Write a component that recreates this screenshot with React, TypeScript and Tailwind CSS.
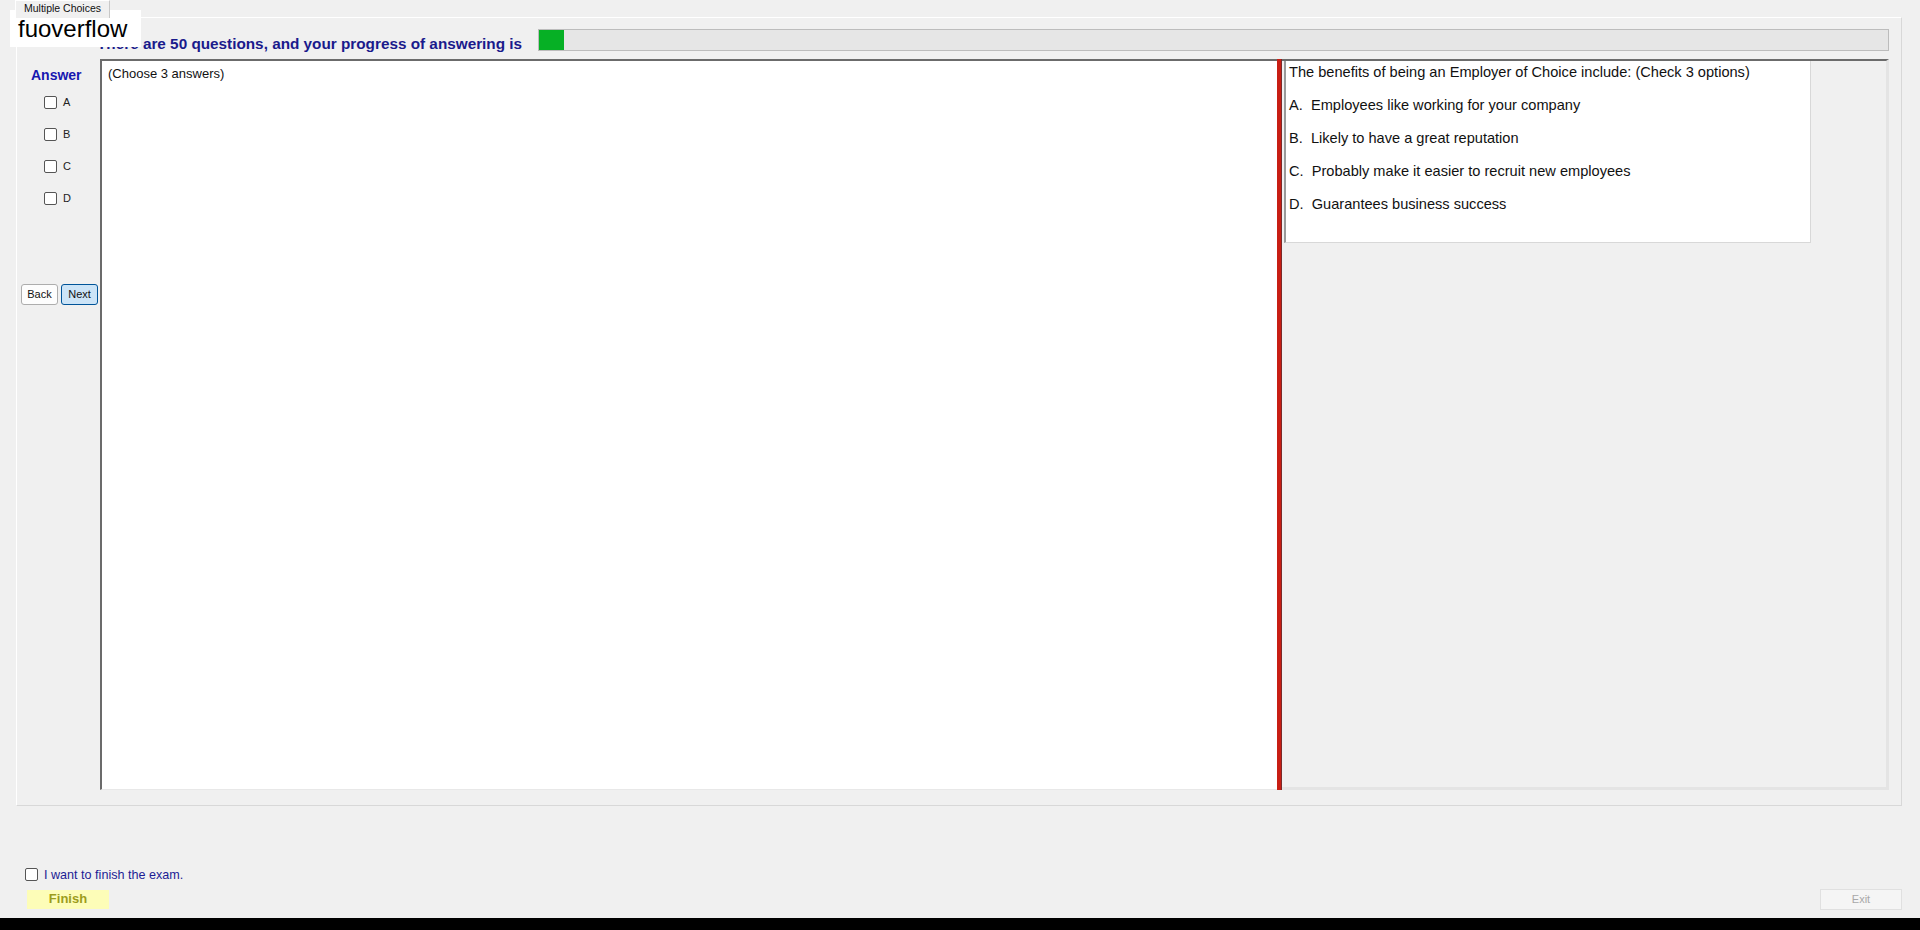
import React from "react";

const Box = () => (
  <span className="inline-block w-[13px] h-[13px] bg-white border border-[#555555] rounded-[2px] shrink-0" />
);

export default function App() {
  const options = [
    "A.  Employees like working for your company",
    "B.  Likely to have a great reputation",
    "C.  Probably make it easier to recruit new employees",
    "D.  Guarantees business success",
  ];
  return (
    <div
      className="relative w-[1920px] h-[930px] bg-[#f0f0f0] flex flex-col overflow-hidden text-black"
      style={{ fontFamily: '"Liberation Sans", Arial, sans-serif' }}
    >
      {/* tab header */}
      <div className="h-[18px] pl-[15px] flex items-end shrink-0">
        <div className="h-[18px] px-[8px] flex items-start pt-[1px] border-t border-l border-r border-t-white border-l-white border-r-[#c8c8c8] text-[10.5px] leading-[12px] text-[#111] bg-[#f0f0f0] relative z-10">
          Multiple Choices
        </div>
      </div>

      {/* tab page */}
      <div className="-mt-[1px] ml-[16px] w-[1886px] h-[789px] border border-t-white border-l-white border-r-[#d8d8d8] border-b-[#d8d8d8] shrink-0 flex flex-col">
        {/* heading row */}
        <div className="mt-[11px] h-[22px] flex shrink-0">
          <div className="w-[521px] pl-[80px] flex items-end">
            <span className="text-[15.3px] font-bold text-[#1a1a8c] leading-none whitespace-nowrap">
              There are 50 questions, and your progress of answering is
            </span>
          </div>
          <div className="w-[1351px] h-[22px] bg-[#e6e6e6] border border-[#bcbcbc] flex items-stretch">
            <div className="w-[25px] bg-[#06b025]" />
          </div>
        </div>

        {/* content row */}
        <div className="mt-[8px] h-[731px] flex shrink-0">
          {/* left answer column */}
          <div className="w-[83px] flex flex-col shrink-0">
            <div className="mt-[8px] pl-[14px] text-[14px] leading-[16px] font-bold text-[#1717b0]">
              Answer
            </div>
            <div className="mt-[3px] flex flex-col">
              {["A", "B", "C", "D"].map((l) => (
                <div key={l} className="h-[32px] pl-[27px] flex items-center gap-[6px]">
                  <Box />
                  <span className="text-[11px] text-[#222]">{l}</span>
                </div>
              ))}
            </div>
            <div className="mt-[70px] pl-[4px] flex gap-[3px]">
              <button className="w-[37px] h-[21px] bg-[#fdfdfd] border border-[#adadad] rounded-[3px] text-[11px] text-[#111] flex items-center justify-center">
                Back
              </button>
              <button className="w-[37px] h-[21px] bg-[#cce4f7] border border-[#005499] rounded-[3px] text-[11px] text-[#111] flex items-center justify-center">
                Next
              </button>
            </div>
          </div>

          {/* white answer box */}
          <div className="w-[1177px] h-[731px] bg-white border-t-2 border-l-2 border-[#6b6b6b] border-b border-b-[#e8e8e8] shrink-0">
            <div className="pl-[6px] pt-[5px] text-[13px] leading-[16px] text-[#111]">(Choose 3 answers)</div>
          </div>

          {/* red splitter */}
          <div className="w-[5px] h-[731px] bg-[#c81e14] border-r border-[#7a2a2a] shrink-0" />

          {/* right panel */}
          <div className="w-[607px] h-[731px] border-t-2 border-[#6b6b6b] border-r-[3px] border-r-[#e4e4e4] border-b-[3px] border-b-[#e4e4e4] shrink-0 flex flex-col">
            <div className="ml-[2px] w-[527px] h-[182px] bg-white border-l-2 border-[#9a9a9a] border-r border-r-[#d8d8d8] border-b border-b-[#d8d8d8] flex flex-col pl-[3px] pt-[3px] text-[14.6px] leading-[17px] text-[#111]">
              <div className="h-[17px] whitespace-pre">The benefits of being an Employer of Choice include: (Check 3 options)</div>
              {options.map((o) => (
                <div key={o} className="mt-[16px] h-[17px] whitespace-pre">{o}</div>
              ))}
            </div>
          </div>
        </div>
      </div>

      {/* bottom area */}
      <div className="flex-1 flex flex-col justify-end">
        <div className="pl-[25px] flex items-center gap-[6px] h-[16px]">
          <Box />
          <span className="text-[12.6px] text-[#1c1c94] leading-none pt-[3px]">I want to finish the exam.</span>
        </div>
        <div className="mt-[6px] h-[22px] flex items-center justify-between pl-[27px] pr-[18px]">
          <div className="w-[82px] h-[19px] bg-[#fdfdb8] flex items-center justify-center text-[13px] font-bold text-[#9c9c1c]">
            Finish
          </div>
          <div className="w-[82px] h-[21px] bg-[#f5f5f5] border border-[#e0e0e0] flex items-center justify-center text-[11px] text-[#a8a8a8]">
            Exit
          </div>
        </div>
        <div className="mt-[8px] h-[12px] bg-black" />
      </div>

      {/* overlay label */}
      <div className="absolute left-[10px] top-[10px] w-[131px] h-[37px] bg-white flex items-center pl-[8px] text-[24px] text-black leading-none">
        fuoverflow
      </div>
    </div>
  );
}
